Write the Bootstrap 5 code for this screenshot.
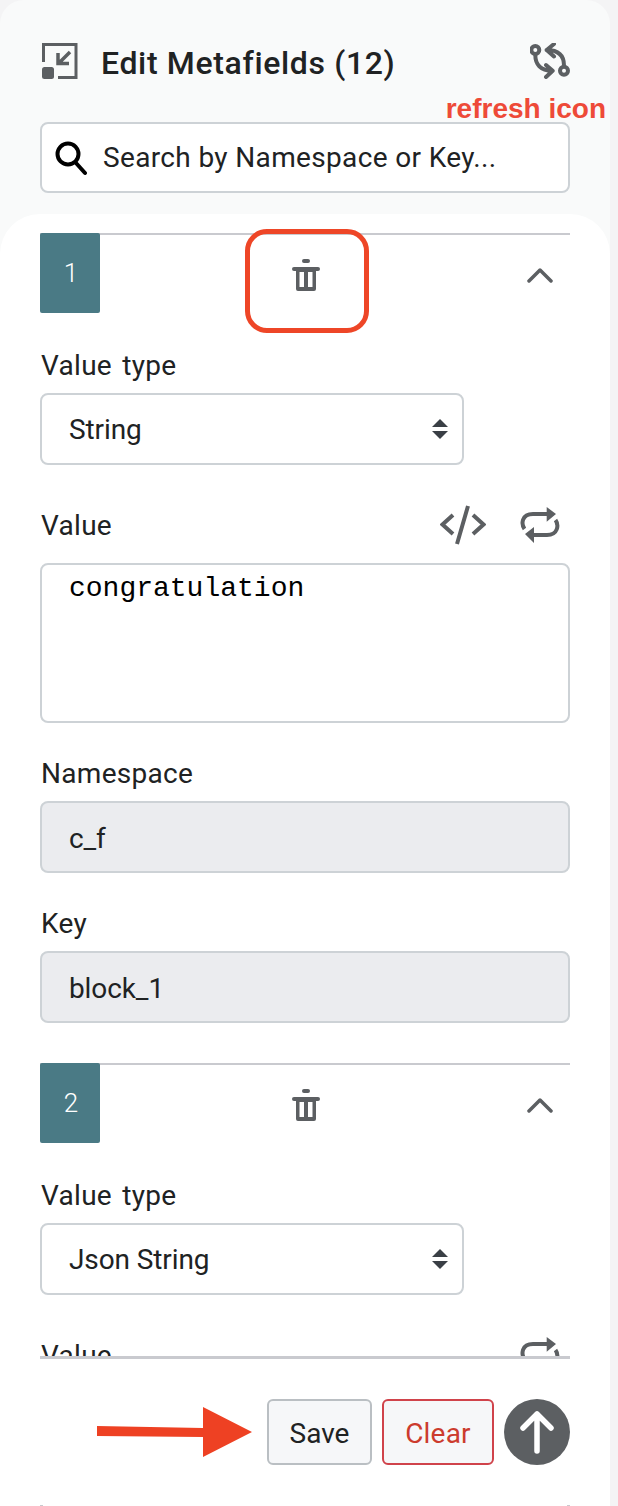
<!DOCTYPE html>
<html lang="en">
<head>
  <meta charset="UTF-8" />
  <meta name="viewport" content="width=device-width, initial-scale=1" />
  <title>Edit Metafields</title>
  <link href="https://cdn.jsdelivr.net/npm/bootstrap@5.3.1/dist/css/bootstrap.min.css" rel="stylesheet" />
  <style>
    body { width: 618px; height: 1506px; overflow: hidden; background: #f4f4f5; font-family: Roboto, "Liberation Sans", sans-serif; color: #202223; }
    .side-panel { width: 610px; height: 1506px; background: #f9fafa; border-radius: 24px 24px 0 0; position: relative; overflow: hidden; }
    .panel-head { height: 122px; padding: 43px 40px 0 42px; }
    .panel-title { font-size: 32px; font-weight: 500; margin: 0 0 0 23px; line-height: 40px; letter-spacing: .65px; }
    .head-icon { color: #5c5f62; flex: none; display: block; }
    .refresh-note { position: absolute; top: 94px; right: 4px; color: #ee4a38; font-family: "Liberation Sans", sans-serif; font-size: 28px; font-weight: 700; line-height: 30px; }
    .search-box { margin: 0 40px; height: 71px; background: #fff; border: 2px solid #cdd2d6; border-radius: 8px; padding: 0 13px; }
    .search-box .form-control { border: 0; outline: 0; box-shadow: none; background: none; font-size: 28px; letter-spacing: .35px; color: #202223; padding: 0; margin-left: 16px; }
    .search-box .form-control::placeholder { color: #202223; opacity: 1; }
    .scroll-area { background: #fff; border-radius: 40px 40px 0 0; margin-top: 21px; height: 1292px; padding: 19px 40px 0 40px; }
    .field-list { height: 1126px; overflow: hidden; border-bottom: 3px solid #c9cacf; }
    .field-block { border-top: 2px solid #c9cacf; margin-bottom: 40px; }
    .block-head { height: 114px; }
    .num-tag { width: 60px; height: 80px; margin-top: -2px; padding-left: 2px; background: #4a7a85; color: #fff; font-size: 26px; border-radius: 2px; font-weight: 300; }
    .block-icon { color: #5c5f62; display: block; flex: none; }
    .trash-btn { margin: 24px 0 0 192px; }
    .chev-btn { margin: 32px 17px 0 auto; }
    .field-label { font-size: 28px; line-height: 34px; height: 32px; margin-bottom: 12px; padding-left: 1px; letter-spacing: .3px; word-spacing: 3px; display: block; color: #202223; }
    .meta-input { height: 72px; border: 2px solid #cdd2d6; border-radius: 8px; padding: 2px 27px 0; font-size: 28px; letter-spacing: -.1px; color: #202223; }
    .meta-input:disabled, .meta-input[readonly] { background: #ebecef; opacity: 1; }
    .meta-select { width: 424px; background-size: 16px 20px; background-position: right 14px center; background-image: url("data:image/svg+xml,%3csvg xmlns='http://www.w3.org/2000/svg' viewBox='0 0 16 20'%3e%3cpath fill='%233a3f45' d='M8 0l8 8H0zM8 20l8-8H0z'/%3e%3c/svg%3e"); }
    .meta-area { height: 160px; font-family: "Liberation Mono", monospace; font-size: 28px; letter-spacing: 0; padding: 8px 27px; line-height: 32px; color: #000; resize: none; background: #fff; }
    .field-gap { margin-top: 34px; }
    .value-gap { margin-top: 44px; }
    .value-row { height: 32px; margin-bottom: 22px; padding-right: 10px; }
    .value-row .field-label { margin-bottom: 0; }
    .value-icons { gap: 34px; }
    .bar-btn { height: 66px; background: #f6f7f9; border: 2px solid #babfc3; border-radius: 6px; font-size: 28px; padding: 3px 0 0; color: #202223; }
    .bar-btn.is-save { width: 105px; }
    .bar-btn.is-clear { width: 112px; border-color: #d0434b; color: #cc3b2e; letter-spacing: .2px; }
    .up-btn { width: 66px; height: 66px; border-radius: 50%; background: #5c5f62; border: 0; padding: 0; }
    .bottom-bar { height: 146px; padding-top: 40px; gap: 10px; }
    .peek-row { height: 1px; }
    .peek-row span { width: 3px; height: 1px; background: #c9cacf; }
    .note-frame { position: absolute; left: 245px; top: 229px; width: 124px; height: 104px; border: 5px solid #ee4627; border-radius: 22px; }
    .note-arrow { position: absolute; left: 96px; top: 1405px; }
  </style>
</head>
<body>
  <div class="side-panel">
    <!-- header -->
    <div class="panel-head d-flex align-items-start">
      <svg class="head-icon" width="36" height="36" viewBox="0 0 36 36" fill="none"><path d="M1.500 19V1.500H34V34.500H16" stroke="currentColor" stroke-width="3"/><rect x="0" y="24" width="12" height="12" rx="2.500" fill="currentColor"/><path d="M28 9 16 21M16 10v10.500h11" stroke="currentColor" stroke-width="3.500"/></svg>
      <h1 class="panel-title flex-grow-1">Edit Metafields (12)</h1>
      <svg class="head-icon" width="40" height="36" viewBox="0 0 40 36" fill="none" stroke="currentColor" stroke-width="4" stroke-linecap="round" stroke-linejoin="round"><circle cx="5.300" cy="7" r="4"/><path d="M5.300 12c0 9 5 15.700 17 15.700M16 22l6.700 5.700-6.700 6.300"/><circle cx="34" cy="27.700" r="4"/><path d="M34 22.500c0-10-5-15.500-17.500-15.500M24 1l-7.300 6 7.300 6.500"/></svg>
    </div>
    <div class="refresh-note">refresh icon</div>

    <!-- search -->
    <div class="search-box d-flex align-items-center">
      <svg width="32" height="36" viewBox="0 0 32 36" fill="none" stroke="#000" stroke-width="4" stroke-linecap="round" class="flex-shrink-0"><circle cx="13" cy="14" r="10.500"/><path d="m21 23 9 10"/></svg>
      <input type="text" class="form-control" placeholder="Search by Namespace or Key..." />
    </div>

    <div class="scroll-area">
      <div class="field-list">
        <!-- block 1 -->
        <div class="field-block">
          <div class="block-head d-flex align-items-start">
            <div class="num-tag d-flex align-items-center justify-content-center">1</div>
            <svg class="block-icon trash-btn" width="28" height="32" viewBox="0 0 28 32" fill="currentColor"><rect x="10" y="0" width="8" height="4" rx="2"/><rect x="0" y="8" width="28" height="4" rx="2"/><path fill-rule="evenodd" d="M4 10h20v20a2 2 0 0 1-2 2H6a2 2 0 0 1-2-2zm3.500 3v15h4.500V13zm8.500 0v15h4.500V13z"/></svg>
            <svg class="block-icon chev-btn" width="26" height="16" viewBox="0 0 26 16" fill="none" stroke="currentColor" stroke-width="3.500" stroke-linecap="round" stroke-linejoin="round"><path d="m2 14 11-11 11 11"/></svg>
          </div>
          <label class="field-label">Value type</label>
          <select class="form-select meta-input meta-select"><option>String</option></select>
          <div class="value-gap">
            <div class="value-row d-flex align-items-center justify-content-between">
              <label class="field-label">Value</label>
              <div class="value-icons d-flex align-items-center">
                <svg class="block-icon" width="46" height="40" viewBox="0 0 46 40" fill="none" stroke="currentColor" stroke-width="4"><path d="M13 10 2.500 19.500 13 29M33 10l10.500 9.500L33 29M28 1 17 39"/></svg>
                <svg class="block-icon" width="40" height="36" viewBox="0 0 40 36"><path fill="none" stroke="currentColor" stroke-width="4" d="M4.500 22C1 17 1.500 7 13 7h15M35.500 13C39 18 38 28 27 28H13"/><path fill="currentColor" d="M26.700 0 36 7l-9.300 7.700zM14 20l-9 7 9 9z"/></svg>
              </div>
            </div>
            <textarea class="form-control meta-input meta-area">congratulation</textarea>
          </div>
          <div class="field-gap">
            <label class="field-label">Namespace</label>
            <input class="form-control meta-input" value="c_f" readonly />
          </div>
          <div class="field-gap">
            <label class="field-label">Key</label>
            <input class="form-control meta-input" value="block_1" readonly />
          </div>
        </div>

        <!-- block 2 -->
        <div class="field-block">
          <div class="block-head d-flex align-items-start">
            <div class="num-tag d-flex align-items-center justify-content-center">2</div>
            <svg class="block-icon trash-btn" width="28" height="32" viewBox="0 0 28 32" fill="currentColor"><rect x="10" y="0" width="8" height="4" rx="2"/><rect x="0" y="8" width="28" height="4" rx="2"/><path fill-rule="evenodd" d="M4 10h20v20a2 2 0 0 1-2 2H6a2 2 0 0 1-2-2zm3.500 3v15h4.500V13zm8.500 0v15h4.500V13z"/></svg>
            <svg class="block-icon chev-btn" width="26" height="16" viewBox="0 0 26 16" fill="none" stroke="currentColor" stroke-width="3.500" stroke-linecap="round" stroke-linejoin="round"><path d="m2 14 11-11 11 11"/></svg>
          </div>
          <label class="field-label">Value type</label>
          <select class="form-select meta-input meta-select"><option>Json String</option></select>
          <div class="value-gap">
            <div class="value-row d-flex align-items-center justify-content-between">
              <label class="field-label">Value</label>
              <svg class="block-icon" width="40" height="36" viewBox="0 0 40 36"><path fill="none" stroke="currentColor" stroke-width="4" d="M4.500 22C1 17 1.500 7 13 7h15M35.500 13C39 18 38 28 27 28H13"/><path fill="currentColor" d="M26.700 0 36 7l-9.300 7.700zM14 20l-9 7 9 9z"/></svg>
            </div>
          </div>
        </div>
      </div>

      <!-- actions -->
      <div class="bottom-bar d-flex justify-content-end align-items-start">
        <button class="btn bar-btn is-save">Save</button>
        <button class="btn bar-btn is-clear">Clear</button>
        <button class="btn up-btn d-flex align-items-center justify-content-center" aria-label="Up">
          <svg width="34" height="44" viewBox="0 0 34 44" fill="none" stroke="#fff" stroke-width="5.500" stroke-linecap="round" stroke-linejoin="round"><path d="M17 41V4M3 18 17 4l14 14"/></svg>
        </button>
      </div>
      <div class="peek-row d-flex justify-content-between"><span></span><span></span></div>
    </div>

    <!-- annotations on the screenshot -->
    <div class="note-frame"></div>
    <svg class="note-arrow" width="158" height="54" viewBox="0 0 158 54"><path fill="#ee4123" d="M1 21 107 23V2l49 25-49 25V32L1 31z"/></svg>
  </div>
</body>
</html>
